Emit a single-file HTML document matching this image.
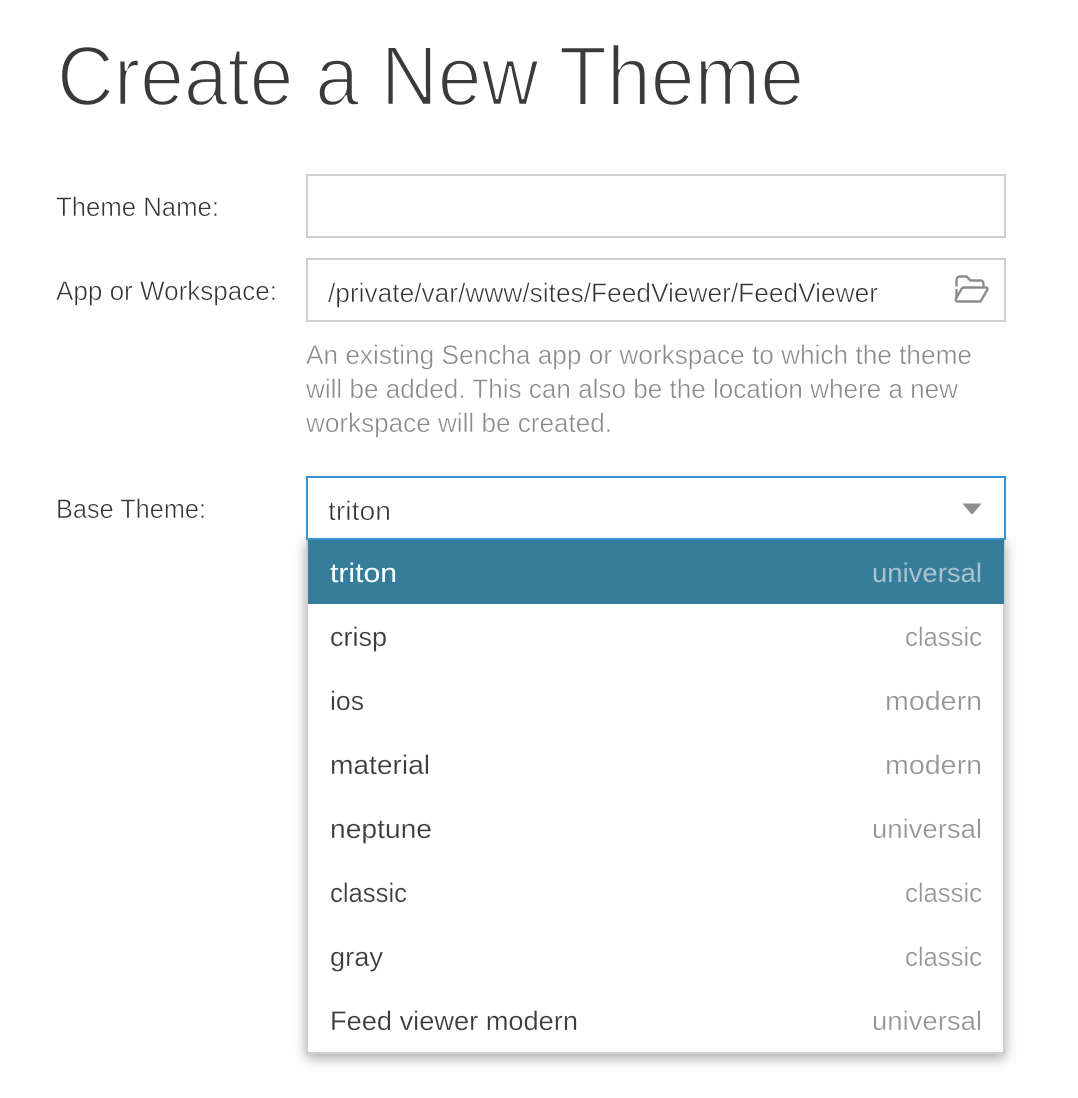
<!DOCTYPE html>
<html lang="en">
<head>
<meta charset="utf-8">
<title>Create a New Theme</title>
<style>
html,body{margin:0;padding:0;background:#fff;width:1078px;height:1098px;overflow:hidden}
.box{position:absolute;box-sizing:border-box;background:#fff}
svg{position:absolute;left:0;top:0}
text{font-family:"Liberation Sans",sans-serif;font-size:27px;fill:#404040}
.light{stroke:#fff;stroke-width:.6px;fill:#333}
.help{fill:#8a8a8a;stroke:#fff;stroke-width:.5px}
.item{fill:#3c3c3c;stroke:#fff;stroke-width:.25px}
.right{fill:#959595;stroke:#fff;stroke-width:.3px}
</style>
</head>
<body>
<div class="box" style="left:306px;top:174px;width:700px;height:64px;border:2px solid #cfcfcf"></div>
<div class="box" style="left:306px;top:258px;width:700px;height:64px;border:2px solid #cfcfcf"></div>
<div class="box" style="left:306px;top:538px;width:699px;height:516px;border:2px solid #cfcfcf;border-top:0;box-shadow:0 4px 12px rgba(0,0,0,.35)"></div>
<div class="box" style="left:308px;top:540px;width:696px;height:64px;background:#367d9b"></div>
<div class="box" style="left:306px;top:476px;width:700px;height:64px;border:2px solid #3892d4"></div>
<svg width="1078" height="1098" viewBox="0 0 1078 1098" xmlns="http://www.w3.org/2000/svg">
<text x="57" y="105" class="light" style="font-size:84px;stroke-width:2.400px;fill:#3a3a3a" textLength="747" lengthAdjust="spacingAndGlyphs">Create a New Theme</text>
<text x="56" y="216" class="light" textLength="163" lengthAdjust="spacingAndGlyphs">Theme Name:</text>
<text x="56" y="300" class="light" textLength="221" lengthAdjust="spacingAndGlyphs">App or Workspace:</text>
<text x="328" y="302" class="light" textLength="550" lengthAdjust="spacingAndGlyphs">/private/var/www/sites/FeedViewer/FeedViewer</text>
<text x="306" y="364" class="help" textLength="666" lengthAdjust="spacingAndGlyphs">An existing Sencha app or workspace to which the theme</text>
<text x="306" y="398" class="help" textLength="652" lengthAdjust="spacingAndGlyphs">will be added. This can also be the location where a new</text>
<text x="306" y="432" class="help" textLength="306" lengthAdjust="spacingAndGlyphs">workspace will be created.</text>
<text x="56" y="518" class="light" textLength="150" lengthAdjust="spacingAndGlyphs">Base Theme:</text>
<text x="328" y="520" class="light" textLength="63" lengthAdjust="spacingAndGlyphs">triton</text>
<path d="M956.500 285.500v-5.500a3.500 3.500 0 0 1 3.500-3.500h6.500l4 4h10a3 3 0 0 1 3 3v2M956.500 298v-8M960 301.500h20.500l7-12a1.500 1.500 0 0 0-1.500-2h-22a3 3 0 0 0-2.500 1.500l-5.500 9.500a2 2 0 0 0 1.500 3z" fill="none" stroke="#8c8c8c" stroke-width="2.400" stroke-linejoin="round" stroke-linecap="round"/>
<path d="M962.500 503.500h19l-8 9.800a2 2 0 0 1-3 0z" fill="#8f8f8f"/>
<text x="330" y="582" style="fill:#fff" textLength="67" lengthAdjust="spacingAndGlyphs">triton</text>
<text x="872" y="582" style="fill:#a9c2cd" textLength="110" lengthAdjust="spacingAndGlyphs">universal</text>
<text x="330" y="646" class="item" textLength="57" lengthAdjust="spacingAndGlyphs">crisp</text>
<text x="905" y="646" class="right" textLength="77" lengthAdjust="spacingAndGlyphs">classic</text>
<text x="330" y="710" class="item" textLength="34" lengthAdjust="spacingAndGlyphs">ios</text>
<text x="885" y="710" class="right" textLength="97" lengthAdjust="spacingAndGlyphs">modern</text>
<text x="330" y="774" class="item" textLength="100" lengthAdjust="spacingAndGlyphs">material</text>
<text x="885" y="774" class="right" textLength="97" lengthAdjust="spacingAndGlyphs">modern</text>
<text x="330" y="838" class="item" textLength="102" lengthAdjust="spacingAndGlyphs">neptune</text>
<text x="872" y="838" class="right" textLength="110" lengthAdjust="spacingAndGlyphs">universal</text>
<text x="330" y="902" class="item" textLength="77" lengthAdjust="spacingAndGlyphs">classic</text>
<text x="905" y="902" class="right" textLength="77" lengthAdjust="spacingAndGlyphs">classic</text>
<text x="330" y="966" class="item" textLength="53" lengthAdjust="spacingAndGlyphs">gray</text>
<text x="905" y="966" class="right" textLength="77" lengthAdjust="spacingAndGlyphs">classic</text>
<text x="330" y="1030" class="item" textLength="248" lengthAdjust="spacingAndGlyphs">Feed viewer modern</text>
<text x="872" y="1030" class="right" textLength="110" lengthAdjust="spacingAndGlyphs">universal</text>
</svg>
</body>
</html>
